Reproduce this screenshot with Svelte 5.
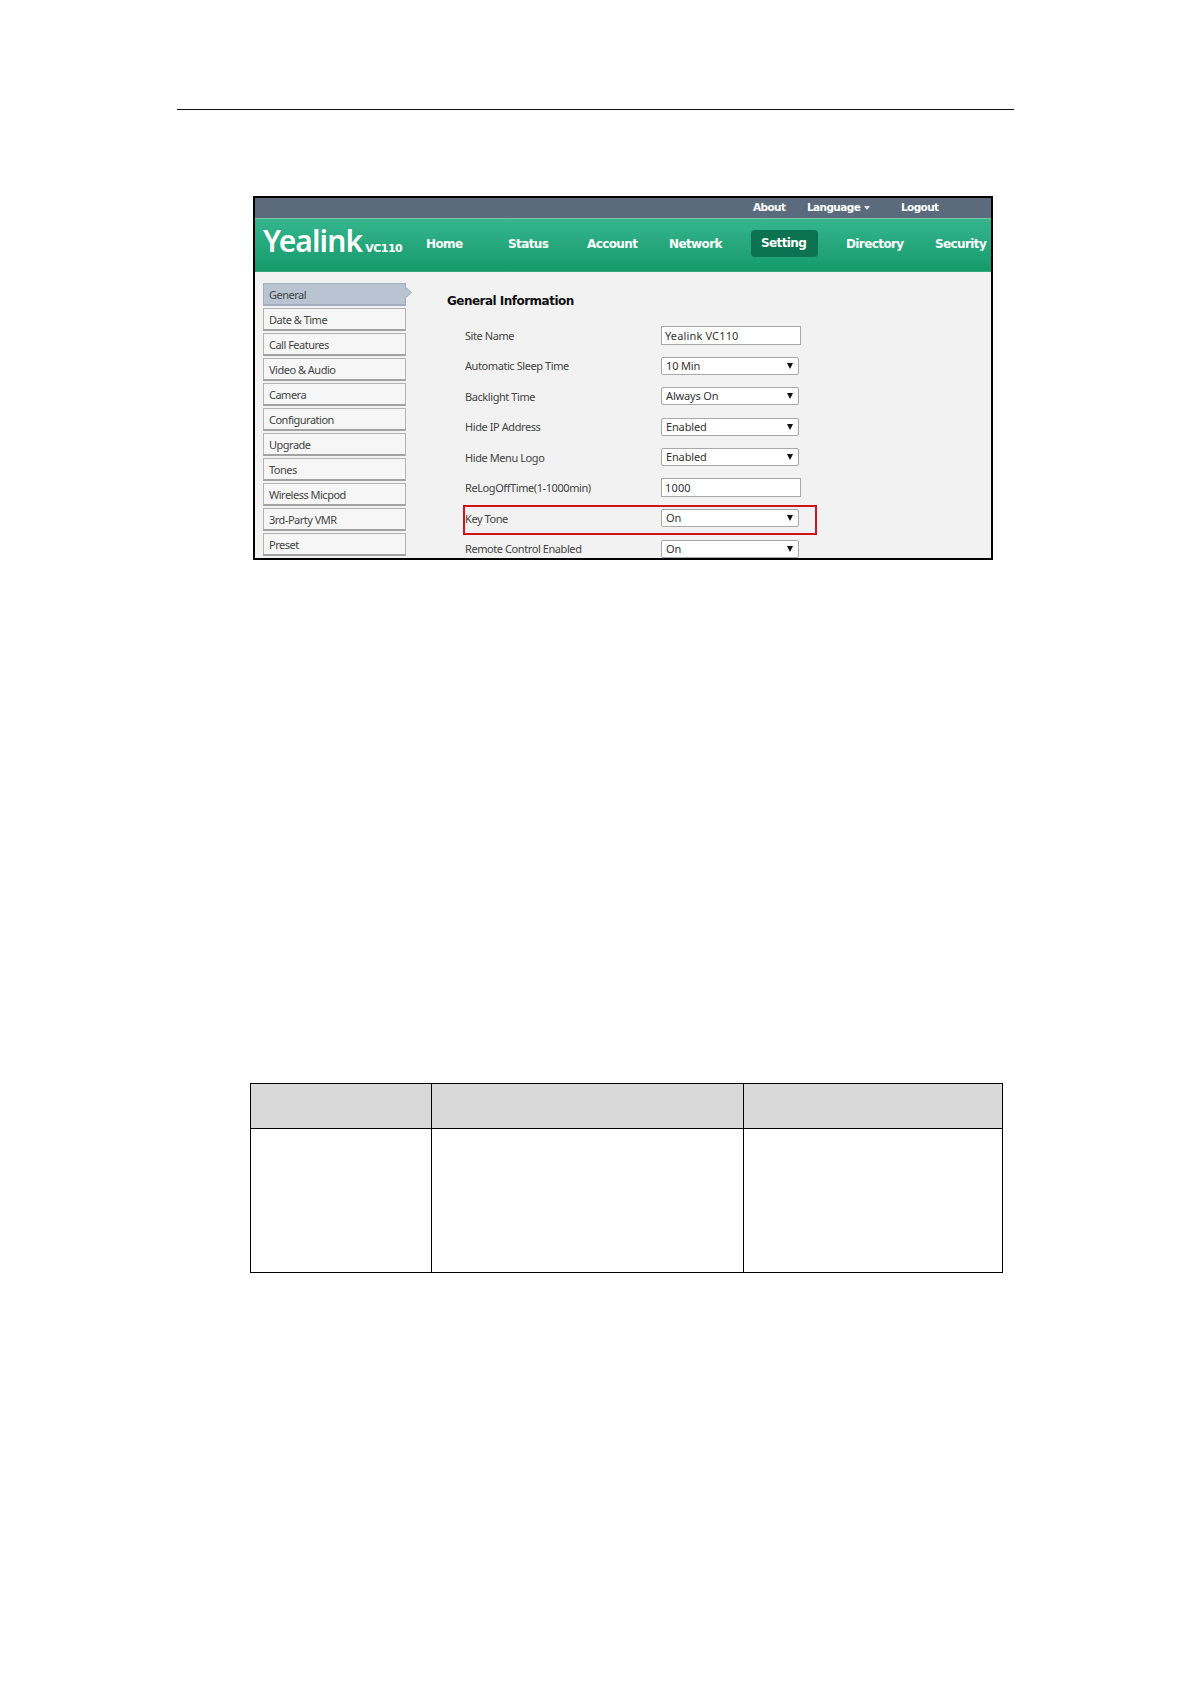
<script>
  const menu = ['General', 'Date & Time', 'Call Features', 'Video & Audio', 'Camera', 'Configuration', 'Upgrade', 'Tones', 'Wireless Micpod', '3rd-Party VMR', 'Preset'];
  const nav = ['Home', 'Status', 'Account', 'Network', 'Setting', 'Directory', 'Security'];
  const fields = [
    { label: 'Site Name', value: 'Yealink VC110', input: true },
    { label: 'Automatic Sleep Time', value: '10 Min' },
    { label: 'Backlight Time', value: 'Always On' },
    { label: 'Hide IP Address', value: 'Enabled' },
    { label: 'Hide Menu Logo', value: 'Enabled' },
    { label: 'ReLogOffTime(1-1000min)', value: '1000', input: true },
    { label: 'Key Tone', value: 'On' },
    { label: 'Remote Control Enabled', value: 'On' }
  ];
</script>

<div class="page">
  <div class="rule"></div>

  <div class="shot">
    <div class="topbar">
      <span class="about">About</span>
      <span class="lang">Language <i class="caret"></i></span>
      <span class="logout">Logout</span>
    </div>

    <div class="header">
      <div class="logo"><span class="brand">Yealink</span><span class="model">VC110</span></div>
      <nav class="nav">
        {#each nav as item}
          <span class="nav-item" class:active={item === 'Setting'}>{item}</span>
        {/each}
      </nav>
    </div>

    <div class="main">
      <ul class="menu">
        {#each menu as item, i}
          <li class:current={i === 0}>{item}</li>
        {/each}
      </ul>

      <div class="content">
        <h2>General Information</h2>
        {#each fields as f}
          <div class="row">
            <span class="label">{f.label}</span>
            {#if f.input}
              <div class="input">{f.value}</div>
            {:else}
              <div class="select">{f.value}<i class="arrow"></i></div>
            {/if}
          </div>
        {/each}
      </div>
    </div>

    <div class="highlight"></div>
  </div>

  <table class="blank">
    <colgroup>
      <col class="c1" />
      <col class="c2" />
      <col class="c3" />
    </colgroup>
    <thead>
      <tr><th></th><th></th><th></th></tr>
    </thead>
    <tbody>
      <tr><td></td><td></td><td></td></tr>
    </tbody>
  </table>
</div>

<style>
  :global(body) {
    margin: 0;
    background: #fff;
  }

  .page {
    width: 1191px;
    height: 1684px;
    padding-top: 109px;
    box-sizing: border-box;
    font-family: "Noto Sans", sans-serif;
    overflow: hidden;
  }

  .rule {
    width: 837px;
    height: 1px;
    margin-left: 177px;
    background: #111;
  }

  .shot {
    position: relative;
    width: 740px;
    height: 364px;
    margin: 86px 0 0 253px;
    box-sizing: border-box;
    border: 2px solid #000;
    background: #f2f2f2;
    overflow: hidden;
  }

  .topbar {
    display: flex;
    height: 20px;
    padding-left: 498px;
    background: #5b6b7d;
    color: #fff;
    font: bold 10.5px/19px "DejaVu Sans", sans-serif;
    letter-spacing: -0.6px;
  }

  .about {
    width: 54px;
  }

  .lang {
    width: 94px;
  }

  .caret {
    display: inline-block;
    margin-left: 1px;
    border: 3px solid transparent;
    border-top: 4px solid #dfe4ea;
    border-bottom: 0;
    vertical-align: 1px;
  }

  .header {
    display: flex;
    height: 54px;
    box-sizing: border-box;
    border-top: 1px solid #79c5ab;
    border-bottom: 1px solid #2fa67c;
    background: linear-gradient(#35b58c, #169a6c);
    color: #fff;
  }

  .logo {
    display: flex;
    align-items: baseline;
    width: 171px;
    padding-left: 8px;
    box-sizing: border-box;
    line-height: 44px;
    white-space: nowrap;
  }

  .brand {
    font: 600 30px/44px "Noto Sans", sans-serif;
    letter-spacing: -0.9px;
  }

  .model {
    margin-left: 3px;
    font: bold 11px/44px "DejaVu Sans", sans-serif;
    letter-spacing: -0.5px;
  }

  .nav {
    display: grid;
    grid-template-columns: 82px 79px 82px 82px 95px 89px 1fr;
    align-items: center;
    flex: 1;
    height: 49px;
    font: bold 12px "DejaVu Sans", sans-serif;
    letter-spacing: -0.6px;
  }

  .nav-item {
    white-space: nowrap;
  }

  .nav-item.active {
    width: 67px;
    height: 27px;
    margin-left: 0;
    box-sizing: border-box;
    padding-left: 10px;
    border-radius: 4px;
    background: #0c7350;
    line-height: 27px;
  }

  .main {
    display: flex;
  }

  .menu {
    width: 143px;
    margin: 11px 0 0 8px;
    padding: 0;
    list-style: none;
    font-size: 11px;
    letter-spacing: -0.5px;
    color: #444;
  }

  .menu li {
    position: relative;
    height: 23px;
    margin-bottom: 2px;
    padding-left: 5px;
    box-sizing: border-box;
    border: 1px solid #b4b4b4;
    border-bottom: 2px solid #a2a2a2;
    background: #f6f6f6;
    line-height: 22px;
  }

  .menu li.current {
    background: #b9c4d2;
    border-color: #a4aeba;
  }

  .menu li.current::after {
    content: "";
    position: absolute;
    top: 4px;
    right: -6px;
    width: 9px;
    height: 9px;
    box-sizing: border-box;
    border-top: 1px solid #a4aeba;
    border-right: 1px solid #a4aeba;
    background: #b9c4d2;
    transform: rotate(45deg) scale(0.8);
  }

  .content {
    margin-left: 41px;
    color: #444;
    font-size: 11px;
  }

  h2 {
    height: 48px;
    margin: 0;
    padding-top: 20px;
    box-sizing: border-box;
    color: #111;
    font: bold 12px/18px "DejaVu Sans", sans-serif;
    letter-spacing: -0.52px;
  }

  .row {
    display: flex;
    align-items: center;
    height: 30.5px;
    padding-left: 18px;
  }

  .label {
    width: 196px;
    letter-spacing: -0.42px;
    white-space: nowrap;
  }

  .input,
  .select {
    position: relative;
    box-sizing: border-box;
    border: 1px solid #a8a8a8;
    background: #fff;
    color: #333;
  }

  .input {
    width: 140px;
    height: 19px;
    padding-left: 3px;
    line-height: 17px;
    letter-spacing: 0.15px;
  }

  .select {
    width: 138px;
    height: 18px;
    padding-left: 4px;
    line-height: 16px;
    letter-spacing: -0.15px;
    border-radius: 2px;
  }

  .arrow {
    position: absolute;
    top: 5px;
    right: 5px;
    border: 3px solid transparent;
    border-top: 6px solid #111;
    border-bottom: 0;
  }

  .highlight {
    position: absolute;
    left: 208px;
    top: 307px;
    width: 354px;
    height: 30px;
    box-sizing: border-box;
    border: 2px solid #d0141c;
  }

  .blank {
    width: 753px;
    height: 190px;
    margin: 523px 0 0 250px;
    border-collapse: collapse;
    table-layout: fixed;
  }

  .c1 {
    width: 181px;
  }

  .c2 {
    width: 312px;
  }

  th,
  td {
    padding: 0;
    border: 1px solid #000;
  }

  th {
    height: 44px;
    background: #d9d9d9;
  }
</style>
